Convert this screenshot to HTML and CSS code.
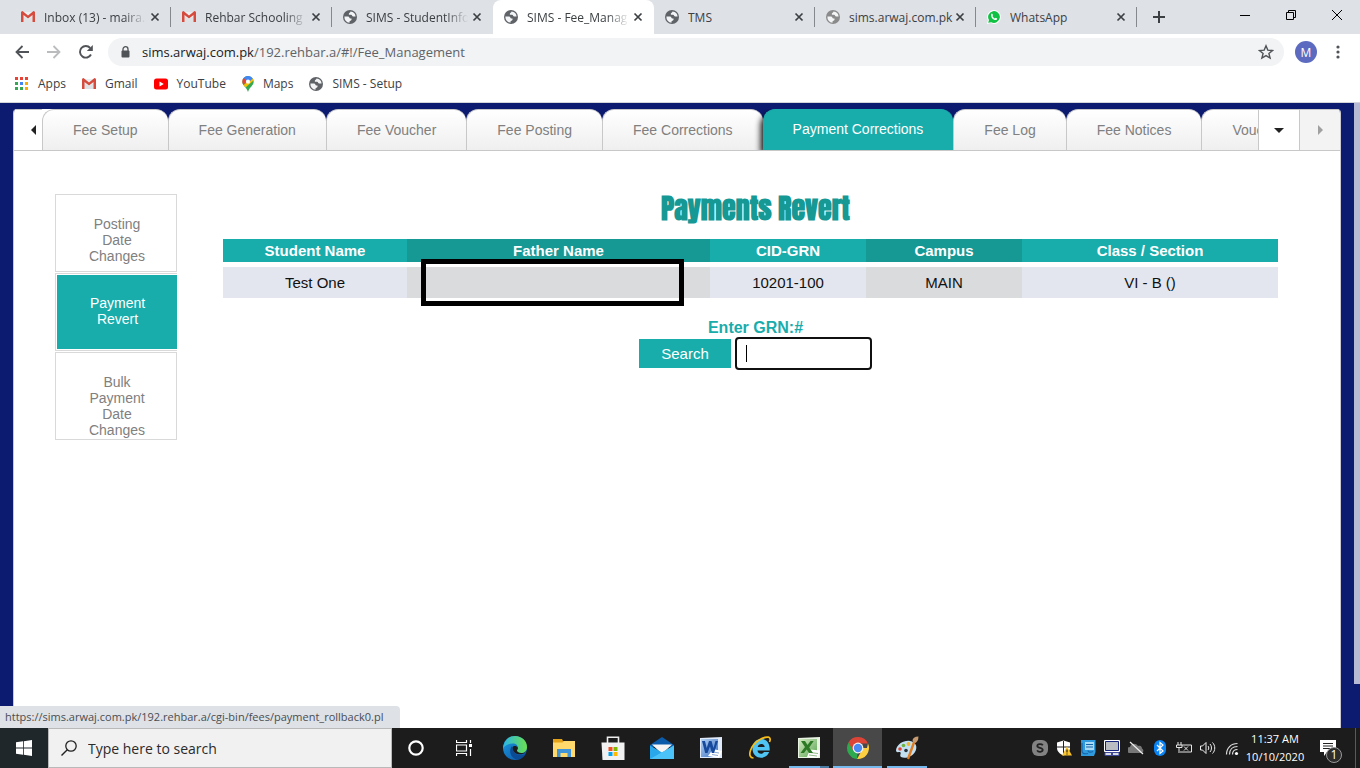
FILE: index.html
```html
<!DOCTYPE html>
<html lang="en">
<head>
<meta charset="utf-8">
<title>SIMS - Fee_Management</title>
<link rel="stylesheet" href="styles.css">
</head>
<body>
<svg class="sprite" aria-hidden="true">
  <defs>
    <linearGradient id="edge-a" x1="0" y1="0" x2="1" y2="0"><stop offset="0" stop-color="#2bb5e8"/><stop offset="1" stop-color="#6be04d"/></linearGradient>
    <linearGradient id="edge-b" x1="0" y1="0" x2="1" y2="1"><stop offset="0" stop-color="#1b9de2"/><stop offset="1" stop-color="#0c4fa0"/></linearGradient>
    <linearGradient id="word-g" x1="0" y1="0" x2="1" y2="1"><stop offset="0" stop-color="#b4d2f4"/><stop offset="1" stop-color="#3a6fc0"/></linearGradient>
    <linearGradient id="excel-g" x1="0" y1="0" x2="1" y2="1"><stop offset="0" stop-color="#d4eac4"/><stop offset="1" stop-color="#5ba552"/></linearGradient>
  </defs>
  <symbol id="i-gmail" viewBox="0 0 14 12">
    <path d="M1 1h12v10H1z" fill="#eceff1"/>
    <path d="M2.500 11V5L7 8.500 11.500 5v6z" fill="#dfe2e5"/>
    <path d="M0 1.500Q0 0 1.500 0L7 4.500 12.500 0Q14 0 14 1.500V11h-2.500V4L7 7.600 2.500 4v7H0z" fill="#d54b3d"/>
  </symbol>
  <symbol id="i-globe" viewBox="0 0 14 14">
    <circle cx="7" cy="7" r="7" fill="currentColor"/>
    <path d="M1.400 6.500H5c1.500 0 1.200 2 2.500 2h1v1.300c0 1-2 .8-2 2v.9A5.700 5.700 0 0 1 1.400 6.500zM7.500 1.400c0 1.500-1.700 1-1.700 2.500 0 1 1.200.8 2.200.8 1.300 0 1 1.800 2.200 1.800h2.400a5.600 5.600 0 0 0-5.100-5.100z" fill="#f2f4f6"/>
  </symbol>
  <symbol id="i-close" viewBox="0 0 10 10"><path d="M1.500 1.500l7 7M8.500 1.500l-7 7" stroke="currentColor" stroke-width="1.700"/></symbol>
  <symbol id="i-whatsapp" viewBox="0 0 15 15">
    <path d="M0 15l1-4A7.400 7.400 0 1 1 4 14z" fill="#fff"/>
    <path d="M1.300 13.700l.8-3A6.300 6.300 0 1 1 4.500 13z" fill="#11c143"/>
    <path d="M4.400 4.500c.5-1 1.200-.9 1.500-.2l.5 1.200-.6 1c.6 1.300 1.400 2 2.600 2.500l.9-.8 1.600.8c0 1.500-1.600 2.300-3.300 1.500C5.700 9.700 4 7.300 4.400 4.500z" fill="#fff"/>
  </symbol>
</svg>

<header class="browser">
  <div class="tab-strip">
    <div class="btab"><svg class="fav fav-mail"><use href="#i-gmail"/></svg><span class="btab-title fade">Inbox (13) - maira.a</span><button class="x" aria-label="Close tab"><svg><use href="#i-close"/></svg></button></div>
    <div class="btab"><svg class="fav fav-mail"><use href="#i-gmail"/></svg><span class="btab-title fade">Rehbar Schooling S</span><button class="x" aria-label="Close tab"><svg><use href="#i-close"/></svg></button></div>
    <div class="btab no-line"><svg class="fav"><use href="#i-globe"/></svg><span class="btab-title fade">SIMS - StudentInfo</span><button class="x" aria-label="Close tab"><svg><use href="#i-close"/></svg></button></div>
    <div class="btab btab-active"><svg class="fav"><use href="#i-globe"/></svg><span class="btab-title fade">SIMS - Fee_Manag</span><button class="x" aria-label="Close tab"><svg><use href="#i-close"/></svg></button></div>
    <div class="btab"><svg class="fav"><use href="#i-globe"/></svg><span class="btab-title">TMS</span><button class="x" aria-label="Close tab"><svg><use href="#i-close"/></svg></button></div>
    <div class="btab"><svg class="fav fav-dim"><use href="#i-globe"/></svg><span class="btab-title">sims.arwaj.com.pk</span><button class="x" aria-label="Close tab"><svg><use href="#i-close"/></svg></button></div>
    <div class="btab"><svg class="fav"><use href="#i-whatsapp"/></svg><span class="btab-title">WhatsApp</span><button class="x" aria-label="Close tab"><svg><use href="#i-close"/></svg></button></div>
    <button class="new-tab" aria-label="New tab"><svg viewBox="0 0 12 12"><path d="M6 0v12M0 6h12" stroke="#3c4043" stroke-width="2"/></svg></button>
    <div class="window-buttons">
      <button aria-label="Minimize"><svg viewBox="0 0 10 10"><path d="M0 5.500h10" stroke="#000"/></svg></button>
      <button aria-label="Restore"><svg viewBox="0 0 10 10"><path d="M.5 2.500h7v7h-7zM2.500 2.500v-2h7v7h-2" fill="none" stroke="#000"/></svg></button>
      <button aria-label="Close"><svg viewBox="0 0 10 10"><path d="M0 0l10 10M10 0L0 10" stroke="#000"/></svg></button>
    </div>
  </div>

  <div class="toolbar">
    <div class="nav-buttons">
      <button aria-label="Back"><svg viewBox="0 0 14 14"><path d="M14 7H1.500M7.500 1L1.500 7l6 6" fill="none" stroke="#505357" stroke-width="1.800"/></svg></button>
      <button aria-label="Forward"><svg viewBox="0 0 14 14"><path d="M0 7h12.500M6.500 1l6 6-6 6" fill="none" stroke="#babcbe" stroke-width="1.800"/></svg></button>
      <button aria-label="Reload"><svg viewBox="0 0 14 14"><path d="M12 9.500A5.800 5.800 0 1 1 11.200 3" fill="none" stroke="#505357" stroke-width="1.900"/><path d="M13.800 0v6H7.800z" fill="#505357"/></svg></button>
    </div>
    <div class="address">
      <svg class="lock" viewBox="0 0 9 12"><path d="M2 5V3.200a2.500 2.500 0 0 1 5 0V5" fill="none" stroke="#505357" stroke-width="1.300"/><rect x=".5" y="4.500" width="8" height="7" rx="1" fill="#505357"/></svg>
      <span class="url"><b>sims.arwaj.com.pk</b>/192.rehbar.a/#!/Fee_Management</span>
      <button class="star" aria-label="Bookmark this page"><svg viewBox="0 0 16 16"><path d="M8 1.800l1.800 4.300 4.700.4-3.600 3 1.200 4.600L8 11.600l-4.100 2.500 1.200-4.600-3.600-3 4.700-.4z" fill="none" stroke="#505357" stroke-width="1.400"/></svg></button>
    </div>
    <button class="avatar" aria-label="Profile">M</button>
    <button class="menu" aria-label="Menu"><svg viewBox="0 0 4 14"><circle cx="2" cy="2" r="1.600"/><circle cx="2" cy="7" r="1.600"/><circle cx="2" cy="12" r="1.600"/></svg></button>
  </div>

  <nav class="bookmarks">
    <a href="#"><svg class="bm" viewBox="0 0 14 14"><path d="M0 0h3v3H0zM5 0h3v3H5zM10 0h3v3h-3z" fill="#ea4335"/><path d="M0 5h3v3H0zM0 10h3v3H0zM5 10h3v3H5z" fill="#34a853"/><path d="M5 5h3v3H5z" fill="#4285f4"/><path d="M10 5h3v3h-3zM10 10h3v3h-3z" fill="#fbab05"/></svg>Apps</a>
    <a href="#"><svg class="bm fav-mail"><use href="#i-gmail"/></svg>Gmail</a>
    <a href="#"><svg class="bm" viewBox="0 0 14 14"><rect y="1.500" width="14" height="11" rx="2.500" fill="#f00"/><path d="M5.500 4.500v5L9.800 7z" fill="#fff"/></svg>YouTube</a>
    <a href="#"><svg class="bm bm-pin" viewBox="0 0 12 16"><path d="M6 0a5.700 5.700 0 0 1 5.700 5.700C11.700 9.500 7.500 11 6 16 4.500 11 .3 9.500.3 5.700A5.700 5.700 0 0 1 6 0z" fill="#34a853"/><path d="M.3 5.700A5.700 5.700 0 0 1 1.800 1.800L5 4.500 1.500 9A6 6 0 0 1 .3 5.700z" fill="#ea4335"/><path d="M1.500 9L10.500 2.200 11.500 4.500 3.500 11.500z" fill="#fbbc04"/><path d="M1.800 1.800A5.700 5.700 0 0 1 10.700 2.500L6 7z" fill="#4285f4"/><circle cx="6" cy="5.700" r="2.100" fill="#fff"/></svg>Maps</a>
    <a href="#"><svg class="bm"><use href="#i-globe"/></svg>SIMS - Setup</a>
  </nav>
</header>

<main class="page">
  <div class="panel">
    <div class="fee-tabs">
      <button class="scroll-btn prev" aria-label="Previous tabs"><svg viewBox="0 0 5 10"><path d="M5 0v10L0 5z"/></svg></button>
      <div class="fee-list" role="tablist">
        <button role="tab">Fee Setup</button>
        <button role="tab">Fee Generation</button>
        <button role="tab">Fee Voucher</button>
        <button role="tab">Fee Posting</button>
        <button role="tab">Fee Corrections</button>
        <button role="tab" class="on" aria-selected="true">Payment Corrections</button>
        <button role="tab">Fee Log</button>
        <button role="tab">Fee Notices</button>
        <button role="tab">Voucher</button>
      </div>
      <button class="scroll-btn drop" aria-label="All tabs"><svg viewBox="0 0 10 5"><path d="M0 0h10L5 5z"/></svg></button>
      <button class="scroll-btn next" aria-label="Next tabs"><svg viewBox="0 0 5 10"><path d="M0 0v10l5-5z"/></svg></button>
    </div>

    <div class="content">
      <nav class="side">
        <a href="#">Posting Date Changes</a>
        <a href="#" class="on">Payment Revert</a>
        <a href="#">Bulk Payment Date Changes</a>
      </nav>
      <section class="revert">
        <h1>Payments Revert</h1>
        <table>
          <colgroup><col class="c-name"><col class="c-father"><col class="c-id"><col class="c-id"><col></colgroup>
          <thead><tr><th>Student Name</th><th>Father Name</th><th>CID-GRN</th><th>Campus</th><th>Class / Section</th></tr></thead>
          <tbody><tr><td>Test One</td><td class="father"><span class="mark"></span></td><td>10201-100</td><td>MAIN</td><td>VI - B ()</td></tr></tbody>
        </table>
        <form class="lookup">
          <label for="grn">Enter GRN:#</label>
          <div class="lookup-row">
            <button type="button" class="search">Search</button>
            <div class="field"><input id="grn" type="text"><span class="caret"></span></div>
          </div>
        </form>
      </section>
    </div>
  </div>
  <div class="scroll-thumb"></div>
  <div class="status">https://sims.arwaj.com.pk/192.rehbar.a/cgi-bin/fees/payment_rollback0.pl</div>
</main>

<footer class="taskbar">
  <button class="start" aria-label="Start"><svg viewBox="0 0 16 16"><path d="M0 2.300L7 1.300v6.300H0zM7.800 1.200L16 0v7.600H7.800zM0 8.400h7v6.300l-7-1zM7.800 8.400H16V16l-8.200-1.200z" fill="#fff"/></svg></button>
  <label class="win-search"><svg viewBox="0 0 16 16"><circle cx="10" cy="6" r="5.200" fill="none" stroke="#222" stroke-width="1.300"/><path d="M6.300 9.700L.5 15.500" stroke="#222" stroke-width="1.400"/></svg><input type="text" placeholder="Type here to search" aria-label="Type here to search"></label>
  <div class="shell">
    <button aria-label="Cortana"><svg class="s16" viewBox="0 0 16 16"><circle cx="8" cy="8" r="6.700" fill="none" stroke="#fff" stroke-width="2.200"/></svg></button>
    <button aria-label="Task View"><svg class="s16" viewBox="0 0 16 16"><path d="M.5 0v2.500h10V0M.5 16v-2.500h10V16M.5 5h10v6H.5zM14.500 0v3M14.500 9v7" fill="none" stroke="#fff" stroke-width="1.200"/><path d="M13 4h3v3h-3z" fill="#fff"/></svg></button>
  </div>
  <div class="apps">
    <button aria-label="Edge"><svg viewBox="0 0 24 24"><circle cx="12" cy="12" r="12" fill="url(#edge-b)"/><path d="M1 8C3 2.500 7 0 12 0c7 0 12 5 12 11 0 4-3 6-6 6-3.500 0-5-1.500-3.500-3.500C16 11 14 7.500 9.500 7.500 5.500 7.500 2 9.500 0 12.500 0 11 .4 9.500 1 8z" fill="url(#edge-a)"/><path d="M9 10c-4 5-1 12.500 5.500 13.800A12 12 0 0 0 22.500 18C17 21 9.500 18 9.500 12z" fill="#0b4a94"/><path d="M9.600 11.500C10 9.500 14 9.500 14.800 12c.1 1-.9 1.600-.9 2.600.3 2.200 4.600 3.400 8.600 1.600C19 20 9.500 19 9.600 11.500z" fill="#1c1c1c"/></svg></button>
    <button aria-label="File Explorer"><svg viewBox="0 0 24 24"><path d="M1 3h9l1 2h12v16H1z" fill="#e3a21a"/><path d="M1 6.500h9.500L12 5h11v16H1z" fill="#ffd96b"/><path d="M5 21v-8h14v8h-3.500v-4h-7v4z" fill="#3f95d8"/></svg></button>
    <button aria-label="Store"><svg viewBox="0 0 24 24"><path d="M6.500 8V1.200h11V8" fill="none" stroke="#eee" stroke-width="1.600"/><path d="M.5 6.500h23V24h-22z" fill="#f1f1f1"/><path d="M7.500 11h4v4h-4z" fill="#f25022"/><path d="M12.500 11h4v4h-4z" fill="#7fba00"/><path d="M7.500 16h4v4h-4z" fill="#00a4ef"/><path d="M12.500 16h4v4h-4z" fill="#ffb900"/></svg></button>
    <button aria-label="Mail"><svg viewBox="0 0 24 24"><path d="M0 9L12 1l12 8v2H0z" fill="#0a5cab"/><path d="M2 8.500h20L12 18z" fill="#f5f5f5"/><path d="M0 9.500l12 7L24 9.500V23H0z" fill="#2aa8ec"/><path d="M24 9.500L0 23h24z" fill="#4cc3f8"/></svg></button>
    <button aria-label="Word"><svg viewBox="0 0 24 24"><path d="M1 2l22-1v21H1z" fill="#dfeafa"/><path d="M2 3h17v18H2z" fill="url(#word-g)"/><path d="M14 13l9 2-3 7-11-2z" fill="#fff"/><path d="M14 16l6 1M13 18.500l6 1" stroke="#6d93c7" stroke-width=".8"/><path d="M3 5h3l1.700 7L10 5h2.500l2 7L16.500 5h2.500l-4 12h-2.200L11 10.500 8.500 17H6.200z" fill="#174a9c"/></svg></button>
    <button aria-label="Internet Explorer"><svg viewBox="0 0 24 24"><path d="M13 3c5.500 0 9 4 8.700 11.500H9.500c.3 3.500 5 4.500 6.500 1.500h5.200c-3 8.500-16.500 7.500-16.700-3C4.400 7 8 3 13 3zM9.700 11h7c-.4-4-6.500-4-7 0z" fill="#50c5f3"/><path d="M5.500 22C-1.500 22 2 9 12 3.500 19-.5 24 .5 21.500 6" fill="none" stroke="#f5bc19" stroke-width="1.700"/></svg></button>
    <button class="run stacked" aria-label="Excel"><svg viewBox="0 0 24 24"><path d="M1 2l22-1v21H1z" fill="#e9f5e2"/><path d="M2 3h18v18H2z" fill="url(#excel-g)"/><path d="M13 13.500l10 1-2 7.500-11-1z" fill="#fff"/><path d="M13 16.500l8 1M12 19l8 1" stroke="#77a96b" stroke-width=".8"/><path d="M4 5h4l2.500 4L13.500 5h3.200l-4.500 6.500L16 17h-4l-2.300-3.500L7 17H3.500L8 11z" fill="#2c7a26"/></svg></button>
    <button class="run current" aria-label="Chrome"><svg viewBox="0 0 24 24"><path d="M12 12L2.500 6.500A11 11 0 0 0 11 23z" fill="#2da94f"/><path d="M12 12h9L22 7.500A11 11 0 0 1 11 23l5-9z" fill="#fdd041"/><path d="M2.500 6.500A11 11 0 0 1 22 7.500H12l-5 7z" fill="#dc4437"/><circle cx="12" cy="12" r="5.400" fill="#f4f4f4"/><circle cx="12" cy="12" r="4.200" fill="#4a8af4"/></svg></button>
    <button class="run" aria-label="Paint"><svg viewBox="0 0 24 24"><path d="M1 14C2 8 9 4 15 5c6 1 8 6 5 11-3 5-10 7-14 5-2-2 1-4-1-5-2 0-4 1-4-2z" fill="#c3e0f1"/><circle cx="5" cy="13" r="1.800" fill="#e0442e"/><circle cx="8.500" cy="9.500" r="1.800" fill="#6db33f"/><circle cx="13.500" cy="8" r="1.900" fill="#f4b52c"/><circle cx="11" cy="14.500" r="1.800" fill="#26323c"/><path d="M13 23l6.500-18" stroke="#e07d22" stroke-width="2.400"/><path d="M17.500 5c0-3 2-4.500 6-4.500C23 3 24 4 20.500 7z" fill="#c79a6f"/></svg></button>
  </div>
  <div class="tray">
    <svg viewBox="0 0 16 16"><rect width="16" height="16" rx="6" fill="#828282"/><path d="M10.800 5.200C9.500 3.500 5.300 3.800 5.300 6c0 2.400 5.400 1.300 5.400 3.800 0 2.400-4.300 2.700-5.600.6" fill="none" stroke="#222" stroke-width="1.800"/></svg>
    <svg viewBox="0 0 16 16"><path d="M1 2.500L7.500.5 14 2.500V8c0 3.500-3 6-6.500 7.500C4 14 1 11.500 1 8z" fill="#fff"/><path d="M7.500 1v14M1 7h13" stroke="#222"/><path d="M11 6.500l5 9H6z" fill="#fcc42c"/><path d="M11 9.500v3M11 13.500v1" stroke="#222" stroke-width="1.200"/></svg>
    <svg viewBox="0 0 16 16"><path d="M1 0h14.500v12L14 16H1z" fill="#2f9ade"/><path d="M5 2h9v8H5z" fill="#a8daf7"/><path d="M6 4.500h7M6 7h7M2 3v8c0 3 3 3 6 2.500M8 10.500c0 2 3 2 5 1" fill="none" stroke="#1565a8" stroke-width="1.200"/></svg>
    <svg viewBox="0 0 16 16"><path d="M.5.5h15v11H.5z" fill="#b9bcc0" stroke="#fff"/><path d="M1.500 1.500h13v9h-13z" fill="none" stroke="#16237c"/><path d="M1 12.500h6.500v3H1zM8.500 12.500H15v3H8.500z" fill="#d9dbe2" stroke="#3e489a"/></svg>
    <svg viewBox="0 0 16 16"><path d="M2 13a3 3 0 0 1 0-6c1-4 6-4 8-1 3-1 4 1 4 2.500 2 1 2 4.500-1 4.500z" fill="#777"/><path d="M2 2l13 12" stroke="#eee" stroke-width="1.200"/></svg>
    <svg viewBox="0 0 16 16"><rect x="2" width="12" height="16" rx="6" fill="#0a84f5"/><path d="M5 5l6 6-3 2.500v-11L11 5l-6 6" fill="none" stroke="#fff" stroke-width="1.200"/></svg>
    <svg viewBox="0 0 16 16"><path d="M6 5h9.500v7H4M2 2v3M5 2v3M.5 5h5.500v2.500H.5zM3 8v5M8 6.500l4 4M12 6.500l-4 4" fill="none" stroke="#e5e5e5"/></svg>
    <svg viewBox="0 0 16 16"><path d="M.5 6h2L6 2.500v11L2.500 10h-2zM8 6c1 1 1 3 0 4M10 4c2 2 2 6 0 8M12.500 2.500c3 3 3 8 0 11" fill="none" stroke="#eee"/></svg>
    <svg viewBox="0 0 16 16"><circle cx="12.500" cy="13.500" r="1.600" fill="#fff"/><path d="M8.500 14.500c0-3 2-5 5-5M5.500 14.500c0-5 3-8 8-8M2.500 14.500C2.500 8 7 3.500 13.500 3.500" fill="none" stroke="#ddd" stroke-width="1.200"/></svg>
  </div>
  <div class="clock"><span>11:37 AM</span><span>10/10/2020</span></div>
  <button class="notes" aria-label="Notifications"><svg viewBox="0 0 16 16"><path d="M0 0h16v12H7l-3 4v-4H0z" fill="#fff"/><path d="M3 3.500h10M3 6h10M3 8.500h10" stroke="#222"/></svg><span class="count">1</span></button>
</footer>
</body>
</html>
```
FILE: styles.css
```css
* { box-sizing: border-box; }
body {
  margin: 0;
  height: 100vh;
  display: flex;
  flex-direction: column;
  overflow: hidden;
  background: #fff;
  font-family: "Open Sans", "Noto Sans", sans-serif;
  font-size: 12px;
  color: #3c4043;
}
button, input { font: inherit; color: inherit; border: 0; padding: 0; margin: 0; background: none; }
button { display: flex; align-items: center; justify-content: center; }
a { color: inherit; text-decoration: none; }
svg { display: block; flex: none; }
.sprite { position: absolute; width: 0; height: 0; }

/* Browser tabs */
.browser { border-bottom: 1px solid #d4d5d8; }
.tab-strip { display: flex; height: 34px; padding-left: 10px; background: #dee1e6; }
.btab { position: relative; display: flex; align-items: center; flex: 0 1 161px; min-width: 0; padding: 0 11px; }
.btab:not(.no-line):not(.btab-active)::after { content: ""; position: absolute; right: 0; top: 7px; width: 1px; height: 20px; background: #85888c; }
.fav { width: 14px; height: 14px; margin-right: 9px; color: #5f6368; }
.fav-mail { height: 12px; }
.fav-dim { color: #8a8a8a; }
.btab-title { flex: 1; overflow: hidden; white-space: nowrap; }
.fade {
  -webkit-mask-image: linear-gradient(to right, #000 80px, transparent 102px);
  mask-image: linear-gradient(to right, #000 80px, transparent 102px);
}
.btab-active { background: #fff; border-radius: 8px 8px 0 0; }
.x svg { width: 10px; height: 10px; }
.new-tab { width: 44px; }
.new-tab svg { width: 12px; height: 12px; }
.window-buttons { display: flex; margin-left: auto; height: 29px; }
.window-buttons button { width: 46px; }
.window-buttons svg { width: 10px; height: 10px; }

/* Toolbar */
.toolbar { display: flex; align-items: center; height: 36px; padding: 0 20px 0 15px; }
.nav-buttons { display: flex; gap: 18px; }
.nav-buttons svg { width: 14px; height: 14px; }
.address { flex: 1; display: flex; align-items: center; height: 28px; margin: 0 11px 0 15px; padding: 0 10px 0 13px; border-radius: 14px; background: #f1f3f4; }
.lock { width: 9px; height: 12px; margin-right: 12px; }
.url { flex: 1; font-size: 13px; color: #5f6368; white-space: nowrap; }
.url b { font-weight: 400; color: #202124; }
.star svg { width: 16px; height: 16px; }
.avatar { width: 22px; height: 22px; border-radius: 50%; background: #5c6bc0; color: #fff; }
.menu { margin-left: 19px; }
.menu svg { width: 4px; height: 14px; fill: #505357; }

.bookmarks { display: flex; align-items: center; gap: 16px; height: 32px; padding: 0 15px 5px; }
.bookmarks a { display: flex; align-items: center; }
.bm { width: 14px; height: 14px; margin-right: 9px; color: #5f6368; }
.bm.fav-mail { height: 12px; }
.bm-pin { width: 12px; height: 16px; }

/* Page */
.page { position: relative; flex: 1; min-height: 0; display: flex; padding: 6px 19px 0 13px; background: #0c1b70; }
.panel { flex: 1; min-width: 0; border: solid #c9c9cf; border-width: 0 1px; border-radius: 4px 4px 0 0; background: linear-gradient(#0c1b70 20px, #fff 20px); font-family: "Liberation Sans", Arial, sans-serif; overflow: hidden; }
.scroll-thumb { position: absolute; right: 0; top: 0; bottom: 44px; width: 6px; background: #b6bad4; }
.status { position: absolute; left: 0; bottom: 0; height: 22px; padding: 0 17px 0 5px; font-size: 11px; line-height: 22px; border-radius: 0 4px 0 0; background: #dee1e6; color: #4a4d51; white-space: nowrap; }

.fee-tabs { display: flex; height: 42px; border-bottom: 1px solid #c8c8c8; font-size: 14px; color: #808080; }
.fee-list { flex: 1; min-width: 0; display: flex; overflow: hidden; background: linear-gradient(to right, #fff 20px, transparent 20px); }
.fee-list button { flex: none; padding: 0 30px; border: solid #c8c8c8; border-width: 1px 0 0 1px; border-radius: 12px 12px 0 0; background: linear-gradient(#fff, #efefef); }
.fee-list .on { padding: 0 30px 2px 29px; background: #18acab; border-color: #18acab; color: #fff; box-shadow: -2px 4px 6px #000; }
.scroll-btn { flex: none; border-top: 1px solid #c8c8c8; background: #fff; }
.prev { width: 28px; padding-left: 11px; }
.drop { width: 41px; border-left: 1px solid #c8c8c8; }
.next { width: 41px; border-left: 1px solid #c8c8c8; background: #f3f3f3; }
.scroll-btn svg { width: 5px; height: 10px; fill: #222; }
.drop svg { width: 10px; height: 5px; }
.next svg { fill: #a0a0a0; }

.content { display: flex; gap: 46px; padding: 43px 52px 0 41px; }
.side { width: 122px; display: flex; flex-direction: column; gap: 1px; font-size: 14px; line-height: 16px; text-align: center; color: #808080; }
.side a { min-height: 78px; padding: 21px 26px 1px 28px; border: 1px solid #d9d9d9; }
.side .on { border-right: 0; color: #fff; background: #18acab; box-shadow: inset 1px 1px #fff, inset 0 -1px #fff; }

.revert { flex: 1; min-width: 0; }
h1 { margin: 0; line-height: 28px; font-family: Impact, "Anton", "Liberation Sans", sans-serif; font-size: 28px; font-weight: 700; text-align: center; color: #169895; }
table { width: calc(100% - 10px); margin-top: 12px; table-layout: fixed; border-collapse: separate; border-spacing: 0 5px; font-size: 15px; text-align: center; color: #111; }
.c-name { width: 184px; }
.c-father { width: 303px; }
.c-id { width: 156px; }
th { height: 23px; padding: 0; background: #18acab; color: #fff; }
td { height: 31px; padding: 0; background: #e3e6ee; }
th:nth-child(even) { background: #169895; }
td:nth-child(even) { background: #dadbdd; }
.father { position: relative; }
.mark { position: absolute; left: 14px; right: 26px; top: -8px; height: 47px; border: 5px solid #000; }

.lookup { display: flex; flex-direction: column; align-items: center; margin-top: 15px; }
.lookup label { font-size: 16px; line-height: 19px; font-weight: 700; color: #18acab; }
.lookup-row { display: flex; align-items: center; gap: 4px; }
.search { width: 92px; height: 29px; background: #18acab; color: #fff; font-size: 15px; }
.field { position: relative; }
.field input { display: block; width: 137px; height: 33px; padding: 0 9px; border: 2px solid #101010; border-radius: 4px; background: #fff; }
.caret { position: absolute; left: 11px; top: 8px; width: 1px; height: 17px; background: #000; }

/* Taskbar */
.taskbar { display: flex; height: 40px; background: #1c1c1c; color: #fff; }
.start { width: 48px; background: #20272b; }
.start svg, .s16 { width: 16px; height: 16px; }
.win-search { display: flex; align-items: center; width: 344px; padding-left: 12px; border: 1px solid #b9b9b9; background: #f1f1f1; color: #2b2b2b; }
.win-search svg { width: 16px; height: 16px; margin-right: 11px; }
.win-search input { flex: 1; min-width: 0; font-size: 14px; }
.win-search input::placeholder { color: #2b2b2b; opacity: 1; }
.shell, .apps { display: flex; }
.shell button { width: 48px; }
.apps { margin-left: 2px; }
.apps button { position: relative; width: 49px; }
.apps svg { width: 24px; height: 24px; }
.run::after { content: ""; position: absolute; left: 5px; right: 4px; bottom: 0; height: 2px; background: #76b9ed; }
.stacked::after { background: linear-gradient(to right, #76b9ed 31px, #4a7ba2 31px); }
.current { background: #484848; }
.current::after { left: 0; right: 0; }
.tray { display: flex; align-items: center; gap: 8px; margin-left: auto; }
.tray svg { width: 16px; height: 16px; }
.clock { display: flex; flex-direction: column; align-items: center; justify-content: center; width: 70px; font-size: 11px; line-height: 18px; }
.notes { position: relative; width: 46px; margin-right: 4px; padding-right: 10px; border-right: 1px solid #5a5a5a; }
.notes svg { width: 16px; height: 16px; }
.count { position: absolute; left: 16px; top: 19px; width: 16px; height: 16px; border: 1px solid #9a9a9a; border-radius: 50%; background: #2c2c2c; line-height: 14px; text-align: center; }
```
